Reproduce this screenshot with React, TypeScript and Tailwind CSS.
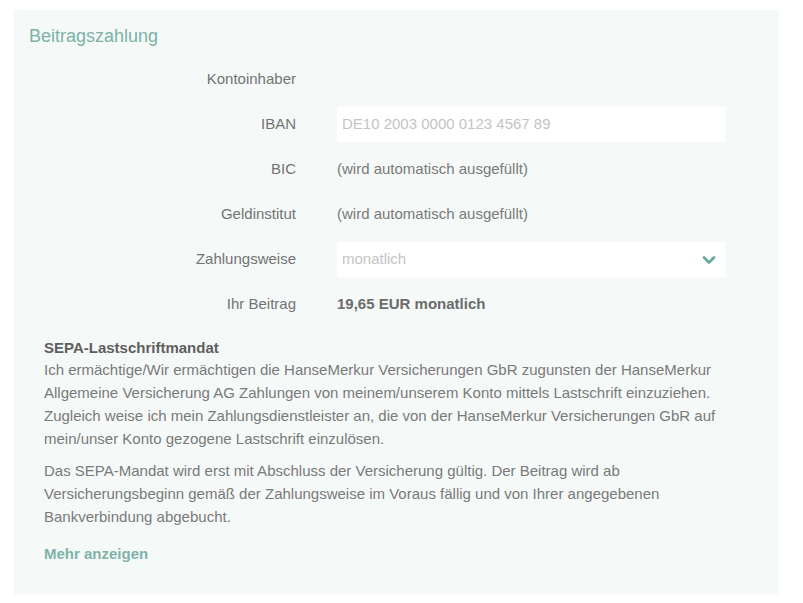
import { ChevronDown } from 'lucide-react'

const rows = [
  { label: 'Kontoinhaber', kind: 'empty' },
  { label: 'IBAN', kind: 'input', value: 'DE10 2003 0000 0123 4567 89' },
  { label: 'BIC', kind: 'text', value: '(wird automatisch ausgefüllt)' },
  { label: 'Geldinstitut', kind: 'text', value: '(wird automatisch ausgefüllt)' },
  { label: 'Zahlungsweise', kind: 'select', value: 'monatlich' },
  { label: 'Ihr Beitrag', kind: 'bold', value: '19,65 EUR monatlich' },
]

function Row({ label, kind, value }: { label: string; kind: string; value?: string }) {
  return (
    <div className="grid grid-cols-[282px_389px] gap-x-[41px] h-[35px] items-center">
      <div className="text-right text-[#737373]">{label}</div>
      {kind === 'input' && (
        <div className="h-[35px] bg-white flex items-center px-[5px] text-[#c4c4c4]">{value}</div>
      )}
      {kind === 'select' && (
        <div className="h-[35px] bg-white flex items-center justify-between pl-[5px] pr-[7px] text-[#c4c4c4]">
          <span>{value}</span>
          <ChevronDown size={20} strokeWidth={3.2} className="text-[#6aa89b]" />
        </div>
      )}
      {kind === 'text' && <div className="text-[#7a7a7a]">{value}</div>}
      {kind === 'bold' && <div className="font-bold text-[#6b6b6b]">{value}</div>}
      {kind === 'empty' && <div />}
    </div>
  )
}

export default function App() {
  return (
    <div className="bg-white min-h-[603px] pt-[10px] px-[14px] font-['Liberation_Sans',Arial,sans-serif] text-[15px]">
      <div className="w-[765px] bg-[#f5f9f8] pt-[15px] pb-[30px]">
        <h2 className="pl-[15px] text-[18px] leading-[22px] text-[#7ab3a6]">Beitragszahlung</h2>
        <div className="mt-[15px] flex flex-col gap-[10px]">
          {rows.map((r) => (
            <Row key={r.label} {...r} />
          ))}
        </div>
        <div className="mt-[14px] px-[30px] text-[#7a7a7a] leading-[23px]">
          <p>
            <span className="block font-bold text-[#5f5f5f] -mb-px">SEPA-Lastschriftmandat</span>
            Ich ermächtige/Wir ermächtigen die HanseMerkur Versicherungen GbR zugunsten der HanseMerkur
            Allgemeine Versicherung AG Zahlungen von meinem/unserem Konto mittels Lastschrift einzuziehen.
            Zugleich weise ich mein Zahlungsdienstleister an, die von der HanseMerkur Versicherungen GbR auf
            mein/unser Konto gezogene Lastschrift einzulösen.
          </p>
          <p className="mt-[9px]">
            Das SEPA-Mandat wird erst mit Abschluss der Versicherung gültig. Der Beitrag wird ab
            Versicherungsbeginn gemäß der Zahlungsweise im Voraus fällig und von Ihrer angegebenen
            Bankverbindung abgebucht.
          </p>
          <p className="mt-[14px] font-bold text-[#7fb3a8]">Mehr anzeigen</p>
        </div>
      </div>
    </div>
  )
}
